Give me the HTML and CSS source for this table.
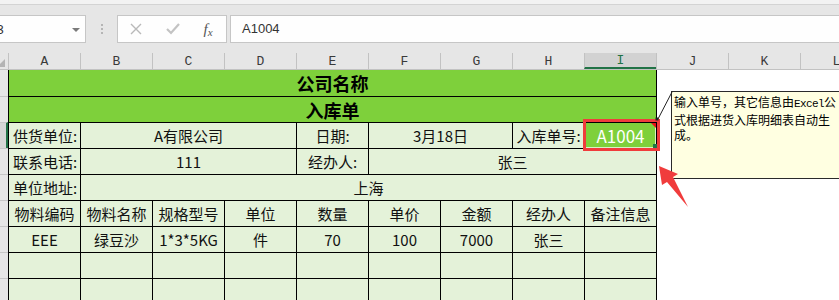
FILE: index.html
```html
<!DOCTYPE html>
<html lang="zh">
<head>
<meta charset="utf-8">
<link rel="stylesheet" href="styles.css">
</head>
<body>
<div class="app">
  <div class="topstrip"></div>
  <div class="toolbar">
    <div class="namebox"><span>I3</span><i class="dd"></i></div>
    <div class="grip"><i></i><i></i><i></i></div>
    <div class="fxbox">
      <span class="fb fb-x"><svg width="12" height="12" viewBox="0 0 12 12"><path d="M1 1 L11 11 M11 1 L1 11" stroke="#b9b9b9" stroke-width="1.4" fill="none"/></svg></span>
      <span class="fb fb-ok"><svg width="14" height="12" viewBox="0 0 14 12"><path d="M1 6 L5 10 L13 1" stroke="#c3c3c3" stroke-width="2.2" fill="none"/></svg></span>
      <span class="fb fb-fx"><em>f</em><em class="sub">x</em></span>
    </div>
    <div class="formula">A1004</div>
  </div>
  <div class="colhead">
    <div class="corner"><i class="tri"></i></div>
    <div class="ch">A</div>
    <div class="ch">B</div>
    <div class="ch">C</div>
    <div class="ch">D</div>
    <div class="ch">E</div>
    <div class="ch">F</div>
    <div class="ch">G</div>
    <div class="ch">H</div>
    <div class="ch ch-sel">I</div>
    <div class="ch">J</div>
    <div class="ch">K</div>
    <div class="ch">L</div>
  </div>
  <div class="sheet">
    <div class="rowhead">
      <div class="rh first"></div>
      <div class="rh"></div>
      <div class="rh rh-sel"></div>
      <div class="rh"></div>
      <div class="rh"></div>
      <div class="rh"></div>
      <div class="rh"></div>
      <div class="rh"></div>
      <div class="rh"></div>
    </div>
    <div class="table">
      <div class="c title first span9">公司名称</div>
      <div class="c title span9">入库单</div>

      <div class="c left">供货单位:</div>
      <div class="c span3">A有限公司</div>
      <div class="c">日期:</div>
      <div class="c span2">3月18日</div>
      <div class="c">入库单号:</div>
      <div class="c sel">A1004<i class="note"></i><i class="handle"></i></div>

      <div class="c left">联系电话:</div>
      <div class="c span3">111</div>
      <div class="c">经办人:</div>
      <div class="c span4">张三</div>

      <div class="c left">单位地址:</div>
      <div class="c span8">上海</div>

      <div class="c">物料编码</div>
      <div class="c">物料名称</div>
      <div class="c">规格型号</div>
      <div class="c">单位</div>
      <div class="c">数量</div>
      <div class="c">单价</div>
      <div class="c">金额</div>
      <div class="c">经办人</div>
      <div class="c">备注信息</div>

      <div class="c">EEE</div>
      <div class="c">绿豆沙</div>
      <div class="c">1*3*5KG</div>
      <div class="c">件</div>
      <div class="c">70</div>
      <div class="c">100</div>
      <div class="c">7000</div>
      <div class="c">张三</div>
      <div class="c"></div>

      <div class="c"></div><div class="c"></div><div class="c"></div><div class="c"></div><div class="c"></div><div class="c"></div><div class="c"></div><div class="c"></div><div class="c"></div>
      <div class="c"></div><div class="c"></div><div class="c"></div><div class="c"></div><div class="c"></div><div class="c"></div><div class="c"></div><div class="c"></div><div class="c"></div>
    </div>
    <div class="rest"></div>
  </div>

  <div class="comment">输入单号，其它信息由<span class="lat">Excel</span>公<br>式根据进货入库明细表自动生<br>成。</div>

  <svg class="overlay" width="839" height="300" viewBox="0 0 839 300">
    <line x1="658" y1="119" x2="672" y2="92" stroke="#222" stroke-width="1"/>
    <rect x="655.5" y="117.5" width="3" height="3" fill="#222"/>
    <polygon points="659,166 678,174 673,177 688,207 667,182 662,185" fill="#f03c3c"/>
  </svg>
</div>
</body>
</html>
```

FILE: styles.css
```css
html, body {
  margin: 0;
  padding: 0;
}
body {
  width: 839px;
  height: 300px;
  overflow: hidden;
  background: #fff;
  font-family: "Noto Sans CJK SC", "Liberation Sans", sans-serif;
}
.app {
  position: relative;
  width: 839px;
  height: 300px;
  overflow: hidden;
}

/* top strip + formula bar */
.topstrip {
  height: 4px;
  background: #f2f2f2;
  border-bottom: 1px solid #d3d3d3;
}
.toolbar {
  height: 48px;
  box-sizing: border-box;
  padding-top: 10px;
  background: #e6e6e6;
  display: flex;
  align-items: flex-start;
}
.namebox {
  margin-left: -14px;
  width: 100px;
  height: 28px;
  box-sizing: border-box;
  border: 1px solid #c6c6c6;
  background: #fefefe;
  display: flex;
  align-items: center;
  justify-content: space-between;
  padding: 0 5px 0 6px;
  font: 13px "Liberation Sans", sans-serif;
  color: #333;
}
.dd {
  width: 0;
  height: 0;
  border-left: 4px solid transparent;
  border-right: 4px solid transparent;
  border-top: 4px solid #7a7a7a;
  margin-top: 1px;
}
.grip {
  margin-left: 15px;
  margin-top: 9px;
  width: 3px;
  display: flex;
  flex-direction: column;
  gap: 2px;
}
.grip i {
  display: block;
  width: 2px;
  height: 2px;
  background: #b5b5b5;
}
.fxbox {
  margin-left: 13px;
  width: 110px;
  height: 28px;
  box-sizing: border-box;
  border: 1px solid #c6c6c6;
  background: #fefefe;
  display: flex;
  align-items: center;
}
.fb {
  display: flex;
  align-items: center;
  justify-content: center;
  height: 26px;
}
.fb-x { width: 36px; }
.fb-ok { width: 38px; }
.fb-fx {
  width: 32px;
  font-family: "Liberation Serif", serif;
  color: #555;
}
.fb-fx em {
  font-style: italic;
  font-size: 15px;
}
.fb-fx .sub {
  font-size: 11px;
  margin-top: 5px;
  margin-left: 0px;
}
.formula {
  margin-left: 3px;
  margin-right: -4px;
  flex: 1;
  height: 28px;
  box-sizing: border-box;
  border: 1px solid #c6c6c6;
  background: #fefefe;
  padding-left: 11px;
  font: 13px/26px "Liberation Sans", sans-serif;
  color: #333;
}

/* column header */
.colhead {
  height: 17px;
  box-sizing: border-box;
  background: #e6e6e6;
  border-bottom: 1px solid #c2c2c2;
  display: flex;
}
.corner {
  width: 8px;
  flex: none;
  position: relative;
}
.tri {
  position: absolute;
  left: -3px;
  bottom: 2px;
  width: 0;
  height: 0;
  border-left: 8px solid transparent;
  border-bottom: 8px solid #b4b4b4;
}
.ch {
  width: 72px;
  flex: none;
  box-sizing: border-box;
  border-left: 1px solid #c2c2c2;
  text-align: center;
  font: 13px/17px "Liberation Mono", monospace;
  color: #3a3a3a;
}
.ch-sel {
  background: #d2d2d2;
  color: #217346;
  border-bottom: 2px solid #217346;
  line-height: 16px;
}

/* sheet body */
.sheet {
  display: flex;
  height: 240px;
}
.rowhead {
  width: 8px;
  flex: none;
  background: #e6e6e6;
}
.rh {
  height: 26px;
  box-sizing: border-box;
  border-top: 1px solid #c6c6c6;
}
.rh.first { border-top: none; }
.rh-sel {
  background: #d6d6d6;
  border-right: 2px solid #217346;
}
.table {
  flex: none;
  display: grid;
  grid-template-columns: repeat(9, 72px);
  grid-auto-rows: 26px;
  border-right: 1px solid #000;
  align-content: start;
}
.c {
  box-sizing: border-box;
  border-left: 1px solid #000;
  border-top: 1px solid #000;
  background: #e4f2d9;
  display: flex;
  align-items: center;
  justify-content: center;
  font-size: 15px;
  line-height: 20px;
  color: #111;
  white-space: nowrap;
}
.c.first { border-top: none; }
.c.left {
  justify-content: flex-start;
  padding-left: 4px;
}
.span2 { grid-column: span 2; }
.span3 { grid-column: span 3; }
.span4 { grid-column: span 4; }
.span8 { grid-column: span 8; }
.span9 { grid-column: span 9; }
.title {
  background: #7ed03b;
  font-size: 18px;
  font-weight: bold;
  color: #000;
}
.sel {
  position: relative;
  background: #7ed03b;
  color: #fff;
  font-size: 17px;
  box-shadow: inset 1px 0 0 #d8f3c4, inset 0 -1px 0 #d8f3c4, inset -1px 0 0 #d8f3c4;
}
.sel::after {
  content: "";
  position: absolute;
  left: -2px;
  right: -4px;
  top: -4px;
  bottom: -3px;
  border: 3px solid #f03c3c;
}
.note {
  position: absolute;
  right: 0;
  top: 0;
  width: 0;
  height: 0;
  border-left: 5px solid transparent;
  border-top: 5px solid #e8101a;
}
.handle {
  position: absolute;
  right: -1px;
  bottom: 0;
  width: 4px;
  height: 4px;
  background: #217346;
}
.rest {
  flex: 1;
  background: #fff;
}

/* comment */
.comment {
  position: absolute;
  left: 671px;
  top: 91px;
  width: 200px;
  height: 88px;
  box-sizing: border-box;
  border: 1px solid #2a2a2a;
  background: #ffffe1;
  padding: 2px 0 0 2px;
  font-size: 12px;
  line-height: 15px;
  color: #000;
  white-space: nowrap;
}
.lat {
  font-family: "Liberation Mono", monospace;
  font-size: 11px;
  letter-spacing: -0.6px;
}
.overlay {
  position: absolute;
  left: 0;
  top: 0;
  pointer-events: none;
}
```
